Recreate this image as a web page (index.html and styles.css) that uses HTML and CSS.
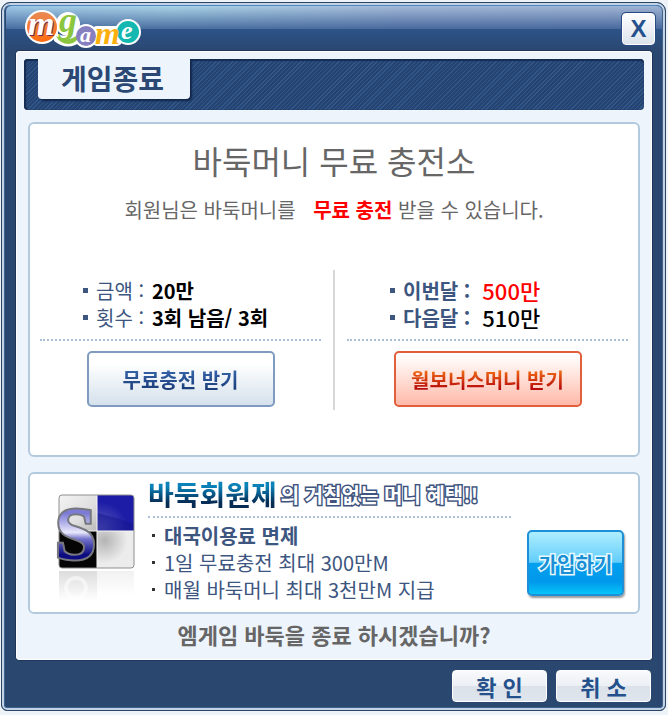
FILE: index.html
```html
<!DOCTYPE html>
<html lang="ko">
<head>
    <meta charset="UTF-8">
    <meta name="viewport" content="width=device-width, initial-scale=1.0">
    <title>게임종료</title>
    <link rel="stylesheet" href="styles.css">
</head>
<body>
<div class="window">
    <header class="title-bar">
        <svg class="logo" width="120" height="42" viewBox="0 0 120 42" role="img" aria-label="mgame">
            <!-- white sticker outline behind the letters -->
            <g fill="#fff" stroke="#fff" stroke-width="4" stroke-linejoin="round">
                <circle cx="18" cy="19" r="15"/>
                <circle cx="44" cy="16" r="10"/>
                <path d="M32 27 Q43 34 56 24 L56 32 Q44 41 32 32z"/>
                <circle cx="62" cy="28" r="10"/>
                <rect x="70" y="20" width="26" height="16" rx="3"/>
                <circle cx="104" cy="24" r="11"/>
            </g>
            <circle cx="18" cy="19" r="15" fill="url(#orange)"/>
            <path d="M32 28 Q44 36 56 25 Q54 35 45 36 Q36 36 32 28z" fill="#8cc63f"/>
            <circle cx="62" cy="28" r="10" fill="#8780c0"/>
            <circle cx="104" cy="24" r="11" fill="#14b8b0"/>
            <text class="logo-m logo-shadow" x="5" y="28">m</text>
            <text class="logo-m" x="4" y="27">m</text>
            <text class="logo-g" x="35" y="24">g</text>
            <text class="logo-a" x="56" y="34">a</text>
            <text class="logo-m2" x="71" y="36">m</text>
            <text class="logo-e" x="97" y="31">e</text>
            <defs>
                <linearGradient id="orange" x1="0" y1="0" x2="0" y2="1">
                    <stop offset="0" stop-color="#e98a55"/>
                    <stop offset="1" stop-color="#ff6c10"/>
                </linearGradient>
            </defs>
        </svg>
        <button class="close-btn" type="button" aria-label="닫기">X</button>
    </header>

    <main class="panel">
        <div class="tab-strip">
            <h1 class="tab">게임종료</h1>
        </div>

        <section class="card charge">
            <h2>바둑머니 무료 충전소</h2>
            <p class="lead">회원님은 바둑머니를 <strong>무료 충전</strong> 받을 수 있습니다.</p>
            <div class="columns">
                <div class="column">
                    <ul class="facts">
                        <li>금액 : <b>20만</b></li>
                        <li>횟수 : <b>3회 남음/ 3회</b></li>
                    </ul>
                    <button class="charge-btn" type="button"><span>무료충전 받기</span></button>
                </div>
                <div class="divider"></div>
                <div class="column">
                    <ul class="facts monthly">
                        <li>이번달 : <b class="red">500만</b></li>
                        <li>다음달 : <b>510만</b></li>
                    </ul>
                    <button class="charge-btn bonus" type="button"><span>월보너스머니 받기</span></button>
                </div>
            </div>
        </section>

        <section class="card member">
            <svg class="emblem" width="80" height="110" viewBox="0 0 80 110" aria-hidden="true">
                <defs>
                    <linearGradient id="silver" x1="0" y1="0" x2="1" y2="1">
                        <stop offset="0" stop-color="#f4f4f4"/>
                        <stop offset="0.6" stop-color="#dedede"/>
                        <stop offset="1" stop-color="#b8b8b8"/>
                    </linearGradient>
                    <radialGradient id="shade" cx="0.2" cy="0.25" r="0.6">
                        <stop offset="0" stop-color="#b4b4b4"/>
                        <stop offset="1" stop-color="#ececec"/>
                    </radialGradient>
                    <radialGradient id="navy" cx="0.1" cy="0.9" r="0.7">
                        <stop offset="0" stop-color="#5c5cc0"/>
                        <stop offset="1" stop-color="#1c1ca6"/>
                    </radialGradient>
                    <linearGradient id="letter" x1="0" y1="0" x2="0" y2="1">
                        <stop offset="0.25" stop-color="#7c7cd6"/>
                        <stop offset="0.48" stop-color="#e8e8fc"/>
                        <stop offset="0.56" stop-color="#7474cc"/>
                        <stop offset="0.75" stop-color="#0c0c80"/>
                    </linearGradient>
                    <linearGradient id="fade" x1="0" y1="0" x2="0" y2="1">
                        <stop offset="0" stop-color="#dcdcdc"/>
                        <stop offset="1" stop-color="#fff"/>
                    </linearGradient>
                    <clipPath id="tile">
                        <rect x="4" y="2" width="75" height="73" rx="3"/>
                    </clipPath>
                </defs>
                <g clip-path="url(#tile)">
                    <rect x="4" y="2" width="38" height="37" fill="url(#silver)"/>
                    <rect x="42" y="2" width="38" height="36" fill="url(#navy)"/>
                    <path d="M42 20 Q60 24 80 31 V38 H42z" fill="#14148c" opacity="0.5"/>
                    <rect x="4" y="38" width="38" height="38" fill="#050505"/>
                    <rect x="42" y="38" width="38" height="38" fill="url(#shade)"/>
                    <path d="M42 2 V76 M4 38 H80" stroke="#f6f6f6" stroke-width="1"/>
                </g>
                <rect x="4" y="2" width="75" height="73" rx="3" fill="none" stroke="#8f8f8f"/>
                <path d="M4 78 H42 V108 H4z" fill="url(#fade)"/>
                <path d="M42 78 H79 V102 H42z" fill="url(#fade)" opacity="0.4"/>
                <circle cx="21" cy="95" r="10" fill="none" stroke="#fff" stroke-width="4" opacity="0.5"/>
                <text class="emblem-letter emblem-rim" x="0" y="66">S</text>
                <text class="emblem-letter" x="0" y="66">S</text>
            </svg>
            <div class="benefits">
                <h2><span class="brand">바둑회원제</span><span class="slogan">의 거침없는 머니 혜택!!</span></h2>
                <ul>
                    <li><b>대국이용료 면제</b></li>
                    <li>1일 무료충전 최대 300만M</li>
                    <li>매월 바둑머니 최대 3천만M 지급</li>
                </ul>
            </div>
            <button class="join-btn" type="button">가입하기</button>
        </section>

        <p class="question">엠게임 바둑을 종료 하시겠습니까?</p>
    </main>

    <footer class="actions">
        <button type="button">확 인</button>
        <button type="button">취 소</button>
    </footer>
</div>
</body>
</html>
```

FILE: styles.css
```css
* {
    box-sizing: border-box;
}
body {
    margin: 0;
    padding: 2px 2px 0 1px;
    background: #eef3f8;
    font-family: "Noto Sans CJK KR", sans-serif;
    font-size: 20px;
    line-height: 27px;
    color: #3d567f;
}
h1, h2, p, ul {
    margin: 0;
    padding: 0;
}
ul {
    list-style: none;
}
button {
    font-family: inherit;
    font-size: 20px;
    font-weight: bold;
    padding: 0;
    cursor: pointer;
}
.window {
    padding: 0 10px 8px 11px;
    border: 1px solid #2b4566;
    border-radius: 9px 9px 6px 6px;
    background: #2a4770;
    box-shadow: inset 0 0 0 2px #c3d3e3, inset 0 0 0 3px #40628f;
}

/* title bar */
.title-bar {
    display: flex;
    justify-content: space-between;
    align-items: center;
    height: 46px;
    margin: 2px -7px 0 -7px;
    padding: 0 7px 0 18px;
    border-top: 1px solid #4b86c2;
    border-radius: 6px 6px 0 0;
    background:
        linear-gradient(to bottom, transparent 0, transparent 23px, #2d5388 23px, #2a4770 100%),
        linear-gradient(to bottom, rgba(52, 88, 145, 0) 0, rgba(52, 88, 145, 0.85) 24px),
        linear-gradient(to right, #9fc8e6, #a9d3e6 25%, #a5b9d8 60%, #a0b4d3);
}
.logo {
    display: block;
    overflow: visible;
}
.logo text {
    font-family: "Liberation Serif", serif;
    font-style: italic;
    font-weight: bold;
    fill: #fff;
}
.logo .logo-m {
    font-size: 34px;
}
.logo .logo-shadow {
    fill: #6e2c50;
}
.logo .logo-g {
    font-size: 36px;
    fill: #8cc63f;
}
.logo .logo-a {
    font-size: 22px;
}
.logo .logo-m2 {
    font-size: 32px;
    fill: #fbb00e;
}
.logo .logo-e {
    font-size: 26px;
}
.close-btn {
    width: 33px;
    height: 32px;
    border: 1px solid #fff;
    border-radius: 4px;
    background: linear-gradient(#fdfdfe, #dce3ec);
    box-shadow: 0 0 0 1px #284a80;
    color: #25508c;
    font-family: "Liberation Sans", sans-serif;
    font-size: 24px;
    line-height: 28px;
}

/* main panel */
.panel {
    padding: 8px 8px 12px 8px;
    margin: 0 3px;
    border-radius: 4px;
    background: #edf4fc;
    box-shadow: 0 0 0 1px #1e3557, inset 0 0 0 1px #fff;
}
.tab-strip {
    height: 51px;
    padding-left: 14px;
    border-radius: 4px;
    background: repeating-linear-gradient(135deg, #254471 0, #254471 2px, #30568a 2px, #30568a 3px);
    box-shadow: inset 0 2px 1px #162c52, inset 2px 0 1px #162c52;
    overflow: hidden;
}
.tab {
    display: inline-block;
    height: 40px;
    padding: 0 26px 0 23px;
    border-radius: 0 0 4px 4px;
    background: #edf4fc;
    box-shadow: 2px 2px 2px #12264a;
    color: #2b4773;
    font-size: 28px;
    line-height: 38px;
}
.card {
    margin: 0 4px;
    border: 2px solid #b3cade;
    border-radius: 6px;
    background: #fff;
}

/* free charge card */
.charge {
    margin-top: 12px;
    padding: 14px 10px 45px;
}
.charge h2 {
    color: #666;
    font-size: 32px;
    font-weight: normal;
    line-height: 44px;
    text-align: center;
}
.lead {
    margin-top: 13px;
    color: #666;
    line-height: 30px;
    text-align: center;
}
.lead strong {
    margin-left: 12px;
    color: #f00;
}
.columns {
    display: flex;
    gap: 12px;
    margin-top: 45px;
}
.column {
    flex: 1;
    padding: 7px 0 3px;
    text-align: center;
}
.divider {
    width: 2px;
    background: #d8d8d8;
}
.facts {
    padding: 0 0 8px 43px;
    border-bottom: 2px dotted #a9c0d8;
    text-align: left;
}
.facts li {
    display: flex;
    align-items: center;
    gap: 8px;
    height: 27px;
}
.facts li::before {
    content: "";
    width: 5px;
    height: 5px;
    background: #3d567f;
}
.facts b {
    color: #000;
}
.monthly {
    font-weight: bold;
}
.monthly b {
    margin-left: 4px;
    font-size: 22px;
    font-weight: 500;
}
.monthly .red {
    color: #f00;
}
.charge-btn {
    width: 188px;
    height: 56px;
    margin-top: 10px;
    border: 2px solid #7f9cc0;
    border-radius: 5px;
    background: linear-gradient(#fff 20%, #d5e1ec);
}
.charge-btn span {
    background: linear-gradient(#3563a8 20%, #1c3f7c 80%);
    -webkit-background-clip: text;
    background-clip: text;
    color: transparent;
}
.charge-btn.bonus {
    border-color: #e0603c;
    background: linear-gradient(#fff 5%, #ffb9a8);
}
.bonus span {
    background-image: linear-gradient(#ef6a12 20%, #b80c0c 80%);
}

/* membership card */
.member {
    display: flex;
    align-items: flex-start;
    margin-top: 15px;
    padding: 5px 14px 9px 25px;
}
.emblem {
    flex: none;
    margin-top: 14px;
    overflow: visible;
}
.emblem-letter {
    font-family: "Liberation Serif", serif;
    font-size: 74px;
    font-weight: bold;
    fill: url(#letter);
}
.emblem-rim {
    fill: none;
    stroke: #77777f;
    stroke-width: 4px;
}
.benefits {
    flex: 1;
    margin-left: 13px;
}
.benefits h2 {
    display: flex;
    align-items: center;
    height: 39px;
    margin-bottom: 4px;
    padding-bottom: 6px;
    border-bottom: 2px dotted #a9c0d8;
    white-space: nowrap;
}
.brand {
    background: linear-gradient(#0b82b8 20%, #062c54 80%);
    -webkit-background-clip: text;
    background-clip: text;
    color: transparent;
    font-size: 28px;
}
.slogan {
    margin-left: 4px;
    color: #fff;
    font-size: 20px;
    -webkit-text-stroke: 3px #3f5580;
    paint-order: stroke fill;
}
.benefits li {
    display: flex;
    align-items: center;
    gap: 9px;
    height: 27px;
    padding-left: 4px;
    white-space: nowrap;
}
.benefits li::before {
    content: "";
    width: 3px;
    height: 3px;
    background: #333;
}
.join-btn {
    width: 97px;
    height: 66px;
    margin: 51px 0 0 16px;
    border: 2px solid #1c8fd6;
    border-radius: 5px;
    background: linear-gradient(#aeeeff, #62cdfb 49%, #04a0f0 50%, #0098ea 80%, #06c4f8);
    box-shadow: 1px 2px 2px #999;
    color: #1a8fd4;
    -webkit-text-stroke: 3px #e6faff;
    paint-order: stroke fill;
}
.question {
    margin-top: 7px;
    color: #666;
    font-size: 22px;
    font-weight: bold;
    text-align: center;
}

/* bottom buttons */
.actions {
    display: flex;
    justify-content: flex-end;
    gap: 9px;
    padding: 10px 4px 0 0;
}
.actions button {
    width: 95px;
    height: 32px;
    border: 1px solid #fff;
    border-radius: 4px;
    background: linear-gradient(#f8fafc, #eceff4 49%, #dbe2ea 50%, #dfe5ed);
    color: #24508c;
    font-size: 22px;
    line-height: 28px;
}
```
